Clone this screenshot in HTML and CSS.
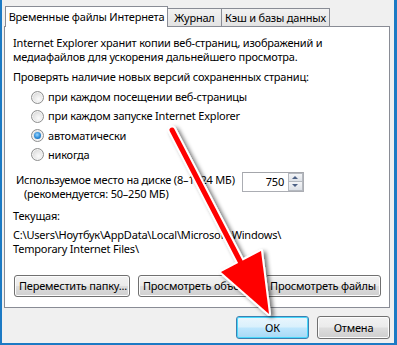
FILE: index.html
```html
<!DOCTYPE html>
<html>
  <head>
    <meta charset="utf-8">
    <title>Свойства: временные файлы Интернета</title>
    <link rel="stylesheet" href="styles.css">
  </head>
  <body>
    <div class="window">
      <div class="tabs">
        <div class="tab active">Временные файлы Интернета</div>
        <div class="tab journal">Журнал</div>
        <div class="tab cache">Кэш и базы данных</div>
      </div>
      <div class="panel">
        <p class="intro">Internet Explorer хранит копии веб-страниц, изображений и<br>медиафайлов для ускорения дальнейшего просмотра.</p>
        <p class="check">Проверять наличие новых версий сохраненных страниц:</p>
        <div class="radios">
          <label class="radio"><span class="dot"></span>при каждом посещении веб-страницы</label>
          <label class="radio"><span class="dot"></span>при каждом запуске Internet Explorer</label>
          <label class="radio"><span class="dot checked"></span>автоматически</label>
          <label class="radio"><span class="dot"></span>никогда</label>
        </div>
        <div class="disk">
          <div class="disk-label">
            Используемое место на диске (8–1024 МБ)<br>
            <span class="hint">(рекомендуется: 50–250 МБ)</span>
          </div>
          <div class="spin">
            <span class="spin-value">750</span>
            <span class="spin-buttons">
              <span class="spin-btn up"></span>
              <span class="spin-btn down"></span>
            </span>
          </div>
        </div>
        <p class="current">Текущая:</p>
        <p class="path">C:\Users\Ноутбук\AppData\Local\Microsoft\Windows\<br>Temporary Internet Files\</p>
        <div class="panel-buttons">
          <button class="button move">Переместить папку...</button>
          <button class="button objects">Просмотреть объекты</button>
          <button class="button files">Просмотреть файлы</button>
        </div>
      </div>
      <div class="dialog-buttons">
        <button class="button default">ОК</button>
        <button class="button">Отмена</button>
      </div>
      <svg class="arrow" width="397" height="345" viewBox="0 0 397 345">
        <defs>
          <filter id="shadow" x="-20%" y="-20%" width="140%" height="140%">
            <feGaussianBlur in="SourceAlpha" stdDeviation="2"/>
            <feOffset dx="3" dy="2" result="blur"/>
            <feComponentTransfer><feFuncA type="linear" slope="0.55"/></feComponentTransfer>
            <feMerge><feMergeNode/><feMergeNode in="SourceGraphic"/></feMerge>
          </filter>
        </defs>
        <g filter="url(#shadow)">
          <line x1="172" y1="130" x2="242" y2="265" stroke="#fff" stroke-width="9" stroke-linecap="round"/>
          <polygon points="269,314 221,272 261,251" fill="#fff" stroke="#fff" stroke-width="4" stroke-linejoin="round"/>
          <line x1="172" y1="130" x2="242" y2="265" stroke="#f00" stroke-width="5" stroke-linecap="round"/>
          <polygon points="269,314 221,272 261,251" fill="#f00"/>
        </g>
      </svg>
    </div>
  </body>
</html>
```

FILE: styles.css
```css
html, body {
  margin: 0;
  padding: 0;
}

body {
  font-family: "Noto Sans", "Open Sans", sans-serif;
  font-size: 11px;
  letter-spacing: -0.2px;
  color: #000;
  background: #f0f0f0;
}

.window {
  position: relative;
  width: 397px;
  height: 345px;
  box-sizing: border-box;
  border-left: 2px solid #1c7ac4;
  border-right: 3px solid #1c7ac4;
  border-bottom: 2px solid #1c7ac4;
  padding: 0 4px 0 2px;
  display: flex;
  flex-direction: column;
  overflow: hidden;
}

.tabs {
  display: flex;
  align-items: flex-end;
  height: 26px;
  padding-left: 1px;
}

.tab {
  height: 17px;
  line-height: 17px;
  box-sizing: content-box;
  padding: 0;
  text-align: center;
  border: 1px solid #898c95;
  border-bottom: none;
  margin-left: -1px;
  background: linear-gradient(#f2f2f2, #e3e3e3);
  white-space: nowrap;
}

.tab.active {
  width: 161px;
  height: 20px;
  line-height: 20px;
  margin-left: 0;
  margin-bottom: -1px;
  background: #fff;
  position: relative;
  z-index: 1;
}

.journal {
  width: 53px;
}

.cache {
  width: 107px;
}

.panel {
  height: 282px;
  box-sizing: border-box;
  border: 1px solid #898c95;
  background: #fff;
  padding: 9px 8px 0 8px;
  line-height: 14px;
}

.panel p {
  margin: 0;
}

.check {
  margin-top: 6px !important;
}

.radios {
  display: flex;
  flex-direction: column;
  gap: 5.3px;
  margin: 6px 0 0 18px;
}

.radio {
  display: flex;
  align-items: center;
  height: 14px;
}

.dot {
  width: 11px;
  height: 11px;
  border-radius: 50%;
  border: 1px solid #8e8f8f;
  background: radial-gradient(circle at 60% 65%, #fbfbfb 0, #e8e8e8 45%, #c9c9c9 100%);
  box-shadow: inset 0 0 0 1px #f4f4f4;
  margin-right: 4px;
  position: relative;
}

.dot.checked::after {
  content: "";
  position: absolute;
  left: 2px;
  top: 2px;
  width: 7px;
  height: 7px;
  border-radius: 50%;
  background: radial-gradient(circle at 45% 40%, #9ad6ff 0, #2b8ad6 55%, #0b4f99 100%);
}

.disk {
  display: flex;
  align-items: flex-start;
  margin-top: 10px;
  padding-left: 3px;
}

.disk-label {
  width: 226px;
  margin-top: 1px;
}

.hint {
  padding-left: 8px;
}

.spin {
  display: flex;
  align-items: stretch;
  width: 62px;
  height: 20px;
  box-sizing: border-box;
  border: 1px solid #abadb3;
  border-top-color: #a4a6ab;
  background: #fff;
}

.spin-value {
  flex: 1;
  text-align: right;
  line-height: 18px;
  padding-right: 4px;
}

.spin-buttons {
  width: 15px;
  display: flex;
  flex-direction: column;
}

.spin-btn {
  flex: 1;
  position: relative;
  border: 1px solid #b5b9c0;
  background: linear-gradient(#f4f5f7, #dde1e7);
}

.spin-btn.up {
  border-bottom: none;
}

.spin-btn::after {
  content: "";
  position: absolute;
  left: 3px;
  border-left: 3px solid transparent;
  border-right: 3px solid transparent;
}

.spin-btn.up::after {
  top: 2px;
  border-bottom: 3px solid #4d6185;
}

.spin-btn.down::after {
  top: 2px;
  border-top: 3px solid #4d6185;
}

.current {
  margin-top: 8px !important;
}

.path {
  margin-top: 5px !important;
}

.panel-buttons {
  display: flex;
  margin-top: 19px;
  padding-left: 1px;
}

.button {
  font-family: inherit;
  font-size: 11px;
  letter-spacing: -0.2px;
  color: #000;
  height: 22px;
  padding: 0 4px;
  border: 1px solid #707070;
  border-radius: 3px;
  background: linear-gradient(#f2f2f2 0, #ebebeb 48%, #dddddd 52%, #cfcfcf 100%);
  box-shadow: inset 0 0 0 1px #fcfcfc;
  white-space: nowrap;
}

.move {
  width: 116px;
}

.objects {
  width: 122px;
  margin-left: 8px;
}

.files {
  width: 118px;
  margin-left: 5px;
}

.dialog-buttons {
  display: flex;
  justify-content: flex-end;
  gap: 8px;
  margin-top: 8px;
  padding-right: 0;
}

.dialog-buttons .button {
  width: 73px;
  height: 23px;
}

.button.default {
  border-color: #3c7fb1;
  background: linear-gradient(#eaf6fd 0, #d9f0fc 48%, #bee6fd 52%, #a7d9f5 100%);
  box-shadow: inset 0 0 0 1px #48d8fb;
}

.arrow {
  position: absolute;
  left: -2px;
  top: 0;
  pointer-events: none;
}
```
